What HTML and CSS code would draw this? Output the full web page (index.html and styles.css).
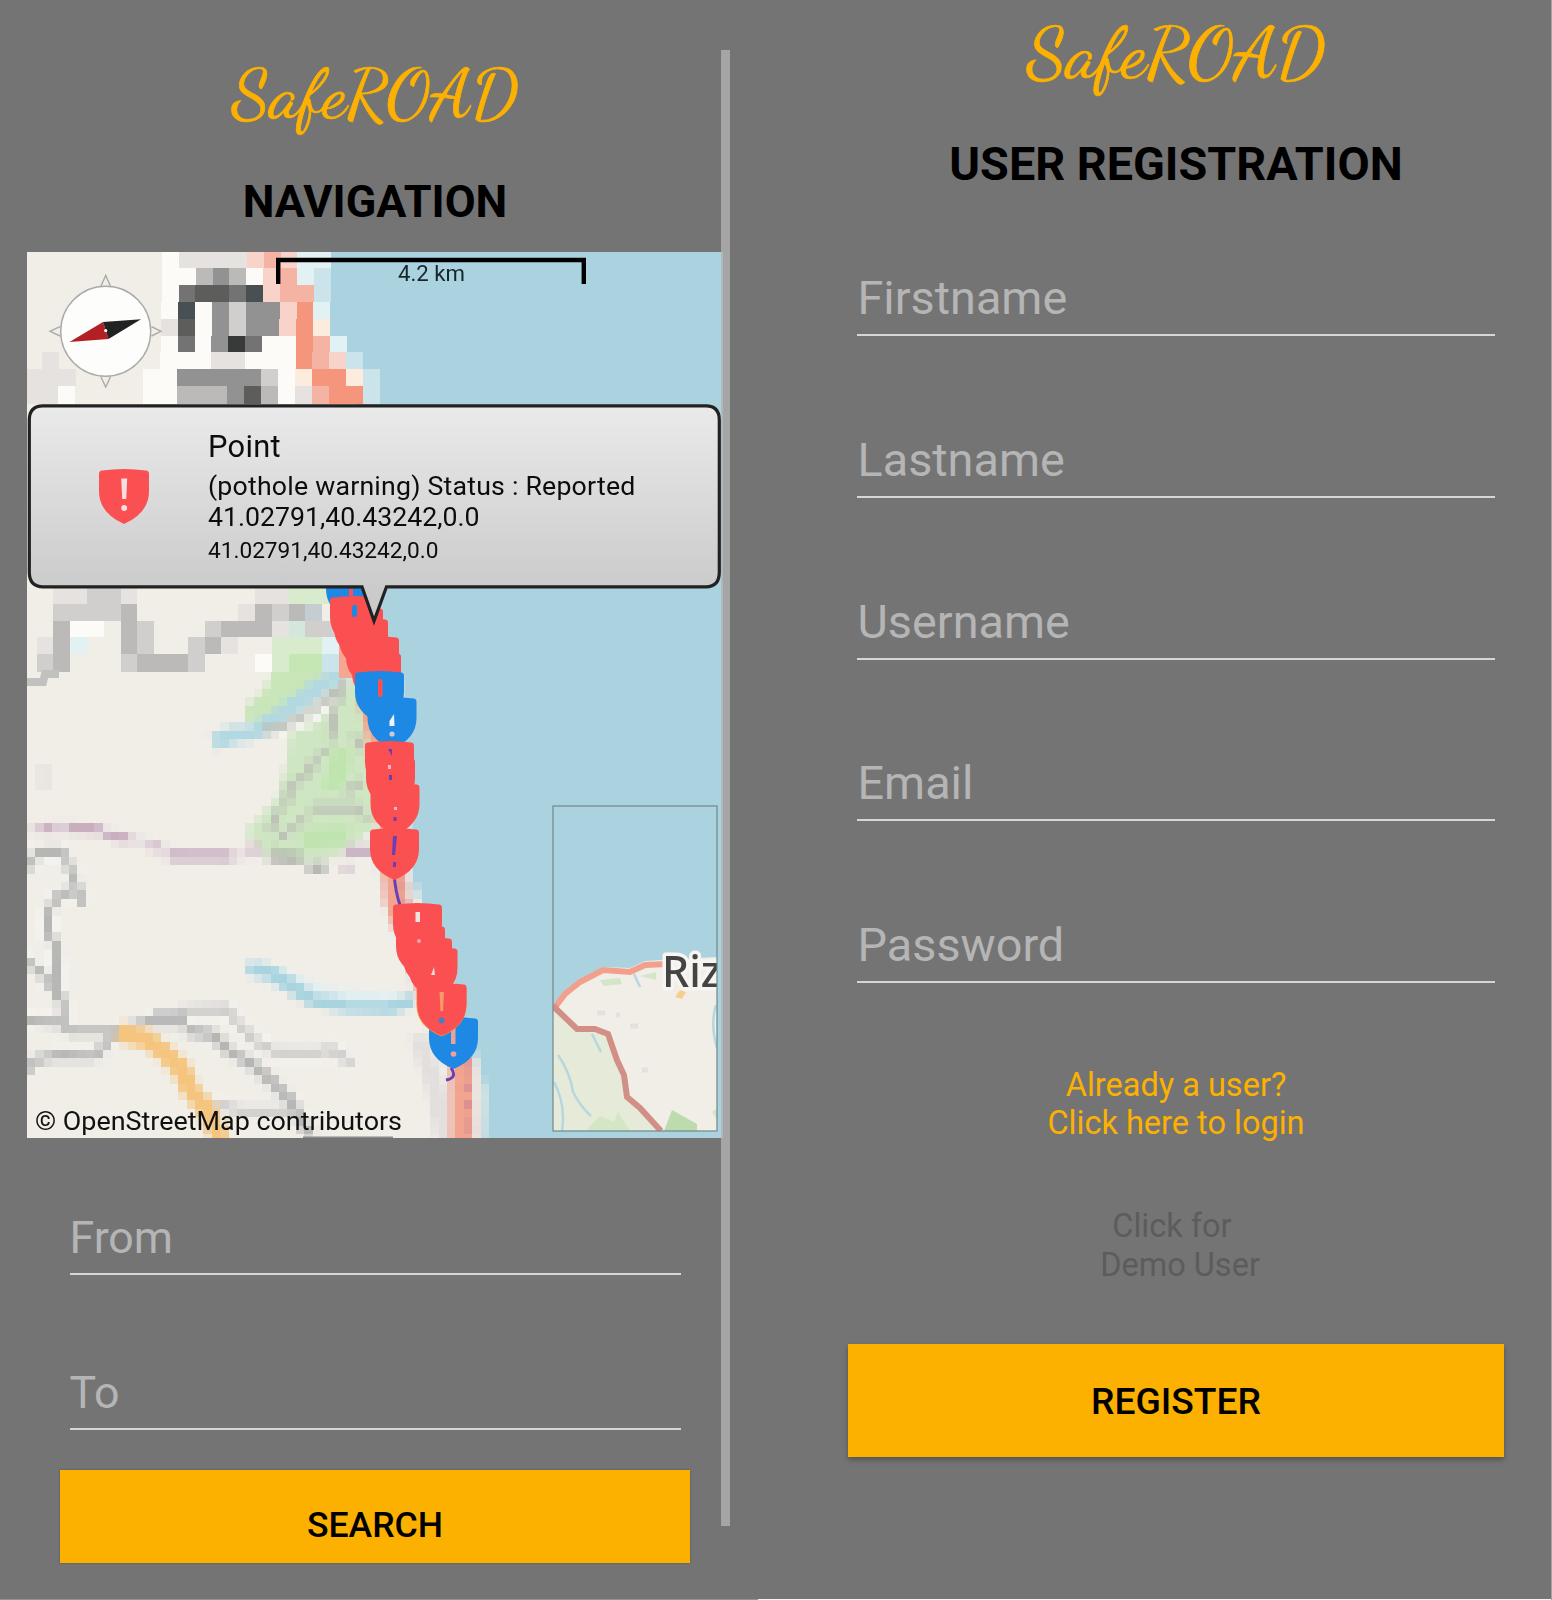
FILE: index.html
```html
<!DOCTYPE html>
<html lang="en">
<head>
<meta charset="utf-8">
<title>SafeROAD</title>
<link rel="stylesheet" href="styles.css">
</head>
<body>
<svg width="0" height="0" class="defs" aria-hidden="true">
  <defs>
    <path id="shield" d="M0 5 Q0 2 3 1.600 Q25 -1.600 46 1.600 Q49 2 49 5 V21 Q49 42 24.500 52 Q0 42 0 21 Z"/>
    <path id="shield-large" d="M0 5 Q0 2 3 1.600 Q25 -1.600 47 1.600 Q50 2 50 5 V22 Q50 44 25 55 Q0 44 0 22 Z"/>
  </defs>
</svg>
<main class="screens">
  <section class="screen navigation">
    <svg class="logo logo-nav" viewBox="0 0 696 172" role="img"><text x="205" y="116" textLength="286" lengthAdjust="spacingAndGlyphs">SafeROAD</text></svg>
    <h1 class="title title-nav">NAVIGATION</h1>
    <div class="map">
      <canvas id="tiles" class="tiles" width="696" height="886"></canvas>
      <svg class="overlay" viewBox="27 252 696 886">
        <g fill="none" stroke="#6a3fb5" stroke-width="3">
          <path d="M394 872 Q395 892 401 908"/>
          <path d="M451 1068 Q458 1078 446 1080"/>
        </g>
        <g fill="#1e88e5">
          <use href="#shield" x="326" y="568"/>
        </g>
        <g fill="#fb5052">
          <use href="#shield" x="330" y="596"/>
          <use href="#shield" x="334" y="607"/>
          <use href="#shield" x="339" y="618"/>
          <use href="#shield" x="346" y="636"/>
          <use href="#shield" x="350" y="636"/>
          <use href="#shield" x="352" y="652"/>
        </g>
        <rect x="349" y="589" width="4" height="7" fill="#fb5052"/>
        <rect x="352" y="605" width="5" height="12" rx="2" fill="#1e88e5"/>
        <g fill="#1e88e5">
          <use href="#shield" x="355" y="671"/>
          <use href="#shield" x="367.500" y="697"/>
        </g>
        <rect x="378" y="679" width="4.500" height="18" rx="2" fill="#fb5052"/>
        <path d="M394 714 L389.500 721 V726 H394.500 Z" fill="#eef6fa"/>
        <circle cx="392" cy="734" r="2.600" fill="#cfc9d4"/>
        <g fill="#fb5052">
          <use href="#shield" x="365" y="741"/>
          <use href="#shield" x="366" y="757"/>
          <use href="#shield" x="370.500" y="783"/>
          <use href="#shield" x="370" y="828"/>
        </g>
        <g fill="#6a3fb5">
          <path d="M388 749 H392 V756 Z"/>
          <rect x="389" y="775" width="3" height="5"/>
          <path d="M393 836 L397 836 L395 855 H392 Z"/>
          <rect x="393" y="862" width="3" height="5"/>
          <rect x="393.500" y="817" width="3" height="4"/>
        </g>
        <g fill="#f0b9bd">
          <rect x="388" y="765" width="3" height="4"/>
          <rect x="394" y="807" width="3" height="3"/>
        </g>
        <use href="#shield" x="429" y="1017" fill="#1e88e5"/>
        <path d="M451 1028 h4.500 v16 h-4.500z" fill="#e9a39a"/>
        <circle cx="453.500" cy="1054" r="2.800" fill="#e9a39a"/>
        <g fill="#fb5052">
          <use href="#shield" x="393" y="903"/>
          <use href="#shield" x="396" y="925"/>
          <use href="#shield" x="403" y="937"/>
          <use href="#shield" x="408.500" y="947"/>
        </g>
        <use href="#shield" x="417" y="984" fill="#fb5052" stroke="#f58a3c" stroke-width="1"/>
        <use href="#shield" x="417.500" y="983" fill="#fb5052"/>
        <rect x="415.500" y="912" width="4.500" height="10" fill="#efe3e2"/>
        <circle cx="419" cy="941" r="2" fill="#f3a9ab"/>
        <path d="M434 967 L431 975 H435 Z" fill="#f7dadb"/>
        <path d="M439.500 992 h4.500 l-1 19 h-2.500z" fill="#f59a6a"/>
        <circle cx="441.500" cy="1020.500" r="3" fill="#4a7cc4"/>

        <g fill="none" stroke="#000" stroke-width="4.400"><path d="M278.200 284 V260 H583.800 V284"/></g>
        <text class="scale-text" x="398" y="280.500" textLength="67" lengthAdjust="spacingAndGlyphs">4.2 km</text>

        <g class="compass" fill="none" stroke="#aaa" stroke-width="1.400">
          <path d="M101 286 L105.700 275.500 L110.400 286 M101 377 L105.700 387 L110.400 377 M60 326.700 L50 331.300 L60 336 M151.500 326.700 L161 331.300 L151.500 336"/>
          <circle cx="105.700" cy="331.300" r="45" fill="#fdfdfb"/>
        </g>
        <path d="M69.500 342 L103 322 L108.500 339 Z" fill="#b22024"/>
        <path d="M141 319.300 L103 322 L108.500 339 Z" fill="#222"/>
        <circle cx="105.700" cy="330.600" r="1.600" fill="#fff"/>

        <clipPath id="mini"><rect x="553" y="806" width="164" height="325"/></clipPath>
        <g clip-path="url(#mini)">
          <rect x="553" y="806" width="164" height="325" fill="#aad3df"/>
          <path d="M553 1008 L565 992 L580 980 L603 967 L630 968 L645 961 L717 957 V1131 H553 Z" fill="#f1eee8"/>
          <path d="M553 1010 L577 1030 L595 1030 L607 1035 L617 1060 L624 1075 L627 1097 L640 1108 L661 1131 H553 Z" fill="#e6ead9"/>
          <path d="M664 1131 L672 1110 L697 1124 V1131 Z" fill="#bcdcae"/>
          <path d="M586 1131 L600 1116 L614 1122 L618 1112 L630 1131 Z M600 980 L620 978 L622 984 L604 986 Z M640 976 L656 972 L656 980 Z M712 1112 L717 1108 V1120 Z" fill="#d3e6c5"/>
          <path d="M558 1055 Q570 1072 573 1092 Q580 1106 591 1116 M554 1082 Q566 1104 562 1131 M592 1034 L601 1052 M634 974 L640 987 M716 1005 Q710 1025 717 1048" fill="none" stroke="#b5d8e0" stroke-width="2.500"/>
          <path d="M597 1013 h8 M630 1026 h8 M616 1015 h4 M642 1070 h6" stroke="#e4e0df" stroke-width="5"/>
          <path d="M553 1010 L565 994 L580 982 L603 970 L630 972 L645 965 L668 964" fill="none" stroke="#f2a08d" stroke-width="6"/>
          <path d="M553 1006 L577 1029 L595 1029 L608 1034 L617 1060 L624 1075 L627 1097 L640 1108 L661 1131" fill="none" stroke="#d18f86" stroke-width="6"/>
          <path d="M675 997 l5 -7 l6 2 l-4 7z" fill="#f6cf8d"/>
          <text class="city" x="662" y="987">Rize</text>
        </g>
        <rect x="553" y="806" width="164" height="325" fill="none" stroke="#75868b" stroke-width="1.200"/>

        <text class="credit" x="35" y="1129.500" textLength="367" lengthAdjust="spacingAndGlyphs">© OpenStreetMap contributors</text>

        <linearGradient id="bubble" x1="0" y1="0" x2="0" y2="1"><stop offset="0" stop-color="#eaeaea"/><stop offset=".85" stop-color="#cbcbcb"/><stop offset="1" stop-color="#c9c9c9"/></linearGradient>
        <path d="M43 405.800 H706 Q719.300 405.800 719.300 420 V572 Q719.300 586.800 706 586.800 H386.500 L374 621 L362 586.800 H43 Q29.300 586.800 29.300 572 V420 Q29.300 405.800 43 405.800 Z" fill="url(#bubble)" stroke="#222" stroke-width="3.200"/>
        <use href="#shield-large" x="99" y="469" fill="#fb5052"/>
        <path d="M121.200 478.500 h6 l-1 20.500 h-4z" fill="#f4dede"/>
        <circle cx="124.200" cy="508" r="2.900" fill="#f4dede"/>
      </svg>
      <div class="bubble-text">
        <div class="bubble-title">Point</div>
        <div class="bubble-line bubble-status">(pothole warning) Status : Reported</div>
        <div class="bubble-line">41.02791,40.43242,0.0</div>
        <div class="bubble-small">41.02791,40.43242,0.0</div>
      </div>
    </div>
    <form class="form-nav">
      <div class="field">From</div>
      <div class="field">To</div>
      <div class="button">SEARCH</div>
    </form>
    <div class="scrollbar"></div>
  </section>
  <section class="screen registration">
    <svg class="logo logo-reg" viewBox="0 0 656 134" role="img"><text x="179" y="75.500" textLength="298" lengthAdjust="spacingAndGlyphs">SafeROAD</text></svg>
    <h1 class="title title-reg">USER REGISTRATION</h1>
    <form class="form-reg">
      <div class="field">Firstname</div>
      <div class="field">Lastname</div>
      <div class="field">Username</div>
      <div class="field">Email</div>
      <div class="field">Password</div>
    </form>
    <p class="link login">Already a user?<br>Click here to login</p>
    <p class="link demo">Click for&nbsp;<br>&nbsp;Demo User</p>
    <div class="button">REGISTER</div>
  </section>
</main>
<script src="map.js"></script>
</body>
</html>
```
FILE: styles.css
```css
* { box-sizing: border-box; }
body { margin: 0; background: #747474; font-family: Roboto, sans-serif; color: #000; }
.defs { position: absolute; }
.screens { display: flex; height: 1600px; overflow: hidden; background: linear-gradient(90deg, #929292 758px, #f4f4f4 758px) 0 100% / 100% 1px no-repeat; border-right: 1px solid #a3a3a3; }
.screen { position: relative; }
.navigation { width: 750px; padding: 0 27px; }
.registration { width: 801px; padding: 0 47px 0 98px; }
.logo { display: block; width: 100%; font: 400 68px "Dancing Script", "Liberation Serif", serif; fill: #fcb100; stroke: #fcb100; stroke-width: .7px; }
.logo-nav { height: 172px; }
.logo-reg { height: 134px; font-size: 71px; }
.title { margin: 0; text-align: center; font-weight: 700; line-height: 60px; }
.title-nav { font-size: 44.900px; }
.title-reg { font-size: 46.750px; }
.map { position: relative; width: 696px; height: 886px; margin-top: 20px; overflow: hidden; }
.tiles, .overlay { position: absolute; inset: 0; display: block; width: 696px; height: 886px; }
.scale-text { font: 22px Roboto, sans-serif; fill: #16272c; }
.credit { font: 26px Roboto, sans-serif; fill: #111; }
.city { font: 500 43px "Noto Sans", sans-serif; fill: #444; stroke: #f7f5f2; stroke-width: 7px; paint-order: stroke; stroke-linejoin: round; }
.bubble-text { position: absolute; left: 181px; top: 177px; color: #0c0c0c; white-space: nowrap; }
.bubble-title { font-size: 30.800px; line-height: 36px; letter-spacing: .3px; margin-bottom: 6px; }
.bubble-line { font-size: 26.700px; line-height: 31px; }
.bubble-status { letter-spacing: .21px; }
.bubble-small { font-size: 22.650px; line-height: 30px; margin-top: 3px; }
.form-nav { display: flex; flex-direction: column; padding: 70px 34px 0; }
.field { width: 611px; margin: 0 auto 88px; padding-bottom: 5px; border-bottom: 2px solid #d6d6d6; color: #b5b5b5; font-size: 44.700px; line-height: 60px; }
.form-nav .field:nth-child(2) { margin-bottom: 40px; }
.button { height: 113px; background: #fcb100; font-size: 37.200px; font-weight: 500; line-height: 115px; text-align: center; box-shadow: 0 3px 5px rgba(0, 0, 0, .28); }
.form-nav .button { height: 93px; margin: 0 -1px; font-size: 35.600px; line-height: 111px; box-shadow: 0 0 2px rgba(0, 0, 0, .3); }
.form-reg { padding: 74px 9px 0 9px; }
.form-reg .field { width: auto; margin: 0 0 93.800px; padding-bottom: 6px; font-size: 46.800px; text-indent: .5px; }
.form-reg .field:last-child { margin-bottom: 0; }
.link { margin: 0; text-align: center; font-size: 32.500px; line-height: 38.500px; }
.login { margin-top: 82.500px; color: #fcb100; }
.demo { margin: 64.500px 0 59.500px; color: #5c5c5c; }
.scrollbar { position: absolute; left: 721px; top: 50px; width: 9px; height: 1476px; background: rgba(178, 178, 178, .8); }
```
FILE: map.js
```js
const canvas = document.getElementById('tiles');
const ctx = canvas.getContext('2d');
const LEFT = 27, TOP = 252;
ctx.imageSmoothingEnabled = false;

const line = (c, color, width, pts, dash) => {
  c.strokeStyle = color;
  c.lineWidth = width;
  c.setLineDash(dash || []);
  c.beginPath();
  pts.forEach(([x, y], i) => (i ? c.lineTo(x, y) : c.moveTo(x, y)));
  c.stroke();
};
const area = (c, color, pts) => {
  c.fillStyle = color;
  c.beginPath();
  pts.forEach(([x, y]) => c.lineTo(x, y));
  c.fill();
};

// The detailed tiles are drawn small and enlarged, as an over-zoomed tile is.
const CELL = 8.4;
const small = document.createElement('canvas');
small.width = 84;
small.height = 107;
const s = small.getContext('2d');
s.scale(1 / CELL, 1 / CELL);
s.translate(-LEFT, -TOP);
s.fillStyle = '#f1eee8';
s.fillRect(0, 0, 760, 1160);
area(s, '#c9e6b9', [[278, 660], [264, 690], [246, 706], [246, 722], [272, 720], [325, 688], [325, 660]]);
area(s, '#cfe6c3', [[347, 684], [318, 712], [290, 733], [287, 763], [276, 800], [245, 832], [262, 852], [300, 862], [332, 858], [385, 822], [380, 735], [362, 680]]);
area(s, '#bfe4ae', [[335, 745], [352, 752], [345, 785], [322, 792]]);
area(s, '#c0e4b0', [[300, 830], [350, 826], [345, 845], [305, 850]]);
line(s, '#f6f6f2', 14, [[262, 735], [310, 718], [335, 700]]);
line(s, '#b2d8e1', 17, [[213, 742], [232, 735], [255, 732], [285, 712], [315, 690], [345, 672]]);
const tracks = [
  [[350, 680], [310, 712], [280, 728], [262, 731]],
  [[342, 690], [333, 710], [333, 737]],
  [[330, 745], [315, 760], [308, 775], [290, 785], [288, 800], [278, 812], [270, 832]],
  [[312, 808], [358, 808], [366, 820]],
  [[308, 815], [290, 830], [277, 840]],
  [[355, 735], [360, 750]], [[345, 792], [362, 782]]
];
tracks.forEach(t => line(s, '#b9bdb4', 7.5, t));
line(s, '#e9e1e2', 11, [[27, 828], [70, 826], [100, 832], [130, 838], [152, 846], [180, 855], [232, 857], [258, 850]]);
line(s, '#c3a6bb', 7, [[40, 828], [56, 828]]);
line(s, '#c3a6bb', 8, [[66, 828], [98, 828], [108, 836], [130, 838]]);
line(s, '#c3a6bb', 8, [[150, 846], [158, 846]]);
line(s, '#bfa3b8', 8, [[168, 856], [232, 856]]);
line(s, '#bfa3b8', 8, [[250, 849], [259, 849]]);
line(s, '#9c9e98', 8, [[268, 857], [302, 858]]);
line(s, '#9c9e98', 8, [[308, 867], [326, 867]]);
line(s, '#bfa3b8', 8, [[345, 851], [375, 851]]);
line(s, '#cdb8c8', 8, [[342, 868], [351, 868]]);
const roads = [
  [[27, 870], [38, 853], [55, 851], [66, 856], [70, 870], [76, 883], [83, 905]],
  [[76, 890], [60, 895], [48, 912], [48, 935], [57, 945], [56, 990], [63, 1002], [63, 1025], [70, 1031], [118, 1032]],
  [[27, 960], [40, 970], [50, 985], [60, 1000]],
  [[27, 1020], [63, 1022]],
  [[27, 1072], [35, 1060], [60, 1055], [95, 1056], [108, 1040], [120, 1030], [150, 1021], [185, 1018]],
  [[180, 1010], [225, 1008], [240, 1025], [255, 1040], [275, 1053], [320, 1052], [330, 1048], [352, 1063]],
  [[185, 1030], [212, 1034], [230, 1052], [250, 1062], [270, 1080], [290, 1100], [300, 1120], [312, 1137]],
  [[215, 1105], [240, 1110], [290, 1110]],
  [[44, 765], [44, 790]]
];
roads.slice(0, 8).forEach(r => line(s, '#f7f6f3', 15, r));
roads.forEach((r, i) => line(s, i === 8 ? '#e2dfdc' : i === 5 || i === 7 ? '#c8c6c4' : '#b6b7b5', i === 6 ? 11 : 8.5, r));
line(s, '#b8b9b8', 15, [[153, 1019], [186, 1019]]);
line(s, '#f5c57e', 19, [[118, 1033], [145, 1038], [165, 1052], [182, 1070], [190, 1090], [208, 1112], [222, 1142]]);
line(s, '#e2eff0', 20, [[250, 966], [290, 981], [325, 998], [400, 1004]]);
line(s, '#a8d3df', 13, [[248, 968], [270, 973], [290, 985], [312, 999], [345, 1006], [390, 1008], [415, 1000]]);
line(s, '#e2dfde', 18, [[418, 1035], [436, 1090], [446, 1145]]);
area(s, '#aad3df', [[388, 560], [396, 650], [406, 760], [410, 870], [420, 900], [452, 980], [476, 1060], [485, 1090], [483, 1160], [760, 1160], [760, 560]]);
line(s, '#e8e6e5', 30, [[388, 850], [398, 900], [432, 1000], [462, 1070], [465, 1150]]);
line(s, '#f3a48f', 22, [[368, 690], [380, 745], [390, 830], [396, 900], [434, 1000], [462, 1065], [462, 1150]]);
line(s, '#c99095', 9, [[404, 880], [404, 905]], [7, 9]);
line(s, '#d48a92', 8, [[467, 1062], [469, 1138]], [8, 12]);
ctx.drawImage(small, 0, 0, 84 * CELL, 107 * CELL);

// Coarse cells above, one character per cell.
const palette = {
  '.': '#f1eee8', w: '#fcfbf8', l: '#e5e2df', h: '#d0cfce', g: '#bbbab9', m: '#929292', d: '#737373',
  D: '#5d5d5b', k: '#373a38', n: '#495054', b: '#aad3df', B: '#cbe4ec', W: '#e2f1f4', G: '#c4e7b4',
  e: '#d8eccd', E: '#d3e7dd', o: '#f5957c', O: '#f5b3a4', p: '#f8d3ca', c: '#fbecdd', q: '#c5cdd1'
};
const grid = (rows, x0, y0, size, drift) => rows.forEach((row, r) => [...row].forEach((ch, c) => {
  ctx.fillStyle = palette[ch];
  const x = Math.round(x0 + c * size - r * drift) - LEFT, y = Math.round(y0 + r * size) - TOP;
  ctx.fillRect(x, y, Math.ceil(size) + 1, Math.ceil(size) + 1);
}));
ctx.fillStyle = '#aad3df';
ctx.fillRect(330, 0, 366, 400);
grid([
  '........wllllpOpWWbbbb',
  '........wwgmgwpOWBbbbb',
  '........wdDDdnpOOBbbbb',
  '........wnwmhmmpoWbbbb',
  '........lDwmhmmpocbbbb',
  '........wdwmkdwwoOWbbb',
  '.l......wwwllwwwoOpBbb',
  'lll....wwmmmmmhwcoocBb',
  'llw....wwgggmDgwlOooBb'
], 27, 251, 16.9, 0.3);
grid([
  '..llhhl.......lleee',
  '..hhhhg......lghgq.',
  '..gww.gh...hggglEhh',
  '.lgW..gh..hgl..eeeW',
  '.hg...hgggh...weGGB'
], 19.7, 587, 16.8, 0);
ctx.fillStyle = '#f5a792';
ctx.fillRect(339 - LEFT, 590 - TOP, 14, 88);
line(ctx, '#c1c2c0', 8, [[0, 430], [16, 430], [18, 422], [32, 422]]);
ctx.fillStyle = '#8a8a89';
ctx.fillRect(303 - LEFT, 1136.5 - TOP, 90, 2);
ctx.fillStyle = '#aad3df';
ctx.fillRect(390 - LEFT, 586 - TOP, 34, 90);
```
